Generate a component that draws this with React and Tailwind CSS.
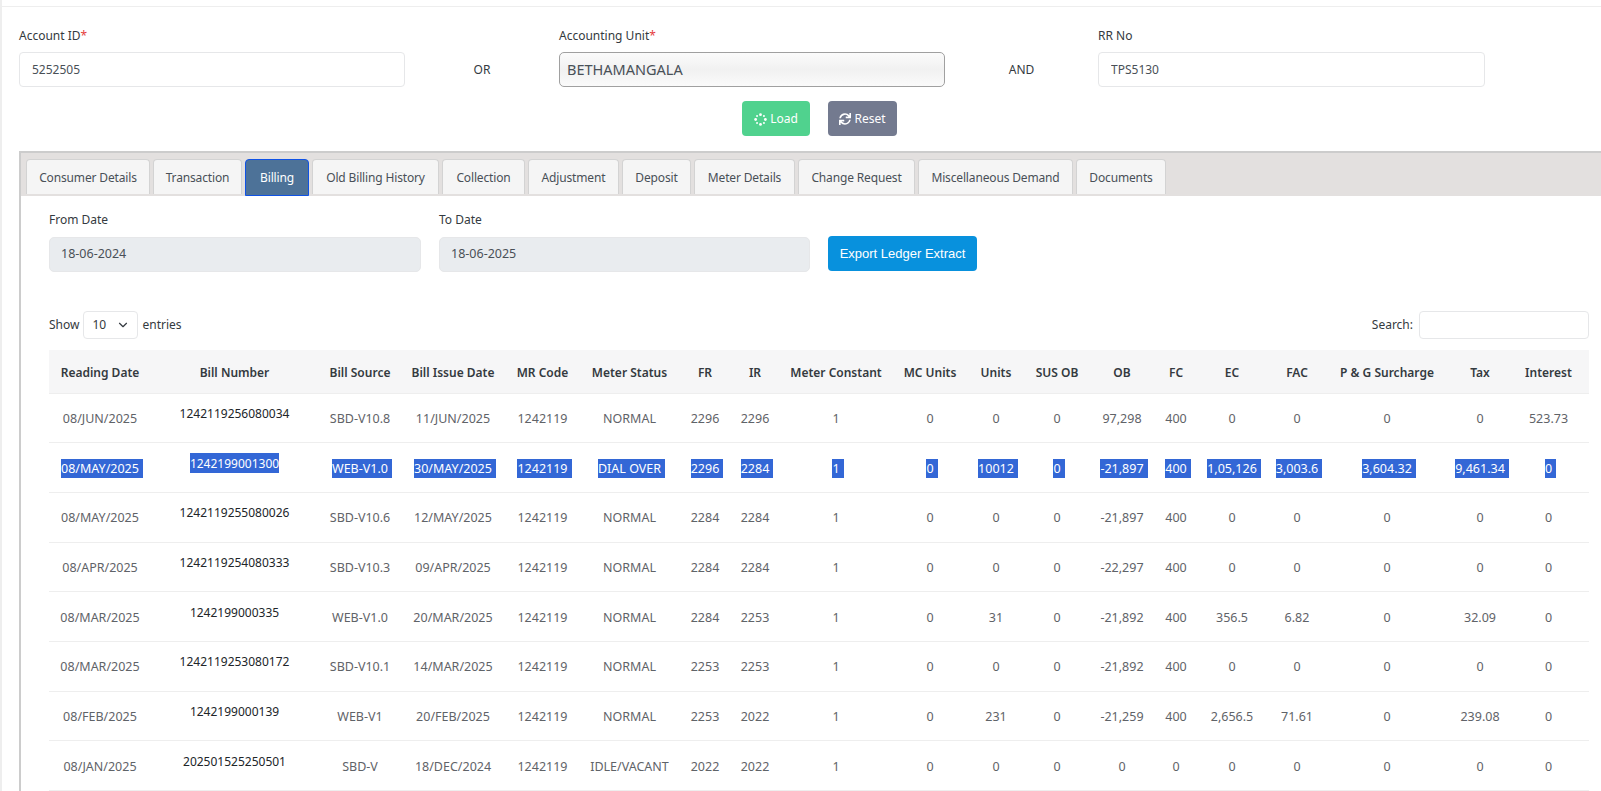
import React from 'react';
import { FaSync } from 'react-icons/fa';
import { ChevronDown } from 'lucide-react';

const tabs = [
  ['Consumer Details', 'w-[124px]'],
  ['Transaction', 'w-[89px]'],
  ['Billing', 'w-[64px]'],
  ['Old Billing History', 'w-[127px]'],
  ['Collection', 'w-[83px]'],
  ['Adjustment', 'w-[91px]'],
  ['Deposit', 'w-[69px]'],
  ['Meter Details', 'w-[101px]'],
  ['Change Request', 'w-[117px]'],
  ['Miscellaneous Demand', 'w-[155px]'],
  ['Documents', 'w-[90px]'],
];

const columns = [
  ['Reading Date', 'w-[102px]'],
  ['Bill Number', 'w-[167px]'],
  ['Bill Source', 'w-[84px]'],
  ['Bill Issue Date', 'w-[102px]'],
  ['MR Code', 'w-[77px]'],
  ['Meter Status', 'w-[97px]'],
  ['FR', 'w-[54px]'],
  ['IR', 'w-[46px]'],
  ['Meter Constant', 'w-[116px]'],
  ['MC Units', 'w-[72px]'],
  ['Units', 'w-[60px]'],
  ['SUS OB', 'w-[62px]'],
  ['OB', 'w-[68px]'],
  ['FC', 'w-[40px]'],
  ['EC', 'w-[72px]'],
  ['FAC', 'w-[58px]'],
  ['P & G Surcharge', 'w-[122px]'],
  ['Tax', 'w-[64px]'],
  ['Interest', 'w-[77px] pr-[4px]'],
];

const rows = [
  ['08/JUN/2025', '1242119256080034', 'SBD-V10.8', '11/JUN/2025', '1242119', 'NORMAL', '2296', '2296', '1', '0', '0', '0', '97,298', '400', '0', '0', '0', '0', '523.73'],
  ['08/MAY/2025', '1242199001300', 'WEB-V1.0', '30/MAY/2025', '1242119', 'DIAL OVER', '2296', '2284', '1', '0', '10012', '0', '-21,897', '400', '1,05,126', '3,003.6', '3,604.32', '9,461.34', '0'],
  ['08/MAY/2025', '1242119255080026', 'SBD-V10.6', '12/MAY/2025', '1242119', 'NORMAL', '2284', '2284', '1', '0', '0', '0', '-21,897', '400', '0', '0', '0', '0', '0'],
  ['08/APR/2025', '1242119254080333', 'SBD-V10.3', '09/APR/2025', '1242119', 'NORMAL', '2284', '2284', '1', '0', '0', '0', '-22,297', '400', '0', '0', '0', '0', '0'],
  ['08/MAR/2025', '1242199000335', 'WEB-V1.0', '20/MAR/2025', '1242119', 'NORMAL', '2284', '2253', '1', '0', '31', '0', '-21,892', '400', '356.5', '6.82', '0', '32.09', '0'],
  ['08/MAR/2025', '1242119253080172', 'SBD-V10.1', '14/MAR/2025', '1242119', 'NORMAL', '2253', '2253', '1', '0', '0', '0', '-21,892', '400', '0', '0', '0', '0', '0'],
  ['08/FEB/2025', '1242199000139', 'WEB-V1', '20/FEB/2025', '1242119', 'NORMAL', '2253', '2022', '1', '0', '231', '0', '-21,259', '400', '2,656.5', '71.61', '0', '239.08', '0'],
  ['08/JAN/2025', '202501525250501', 'SBD-V', '18/DEC/2024', '1242119', 'IDLE/VACANT', '2022', '2022', '1', '0', '0', '0', '0', '0', '0', '0', '0', '0', '0'],
];

function Spinner() {
  const dots = [0, 45, 90, 135, 180, 225, 270, 315];
  return (
    <svg viewBox="0 0 16 16" className="w-[13px] h-[13px]" fill="#fff">
      {dots.map((a, i) => (
        <circle key={a} cx={8 + 6 * Math.cos((a * Math.PI) / 180)} cy={8 + 6 * Math.sin((a * Math.PI) / 180)} r={i % 2 ? 1.2 : 1.7} />
      ))}
    </svg>
  );
}

function Field({ label, required, value, width }) {
  return (
    <div className={width}>
      <div className="h-[27px] text-[12px] leading-[22px] text-[#343a40]">
        {label}
        {required && <span className="text-[#e53e3e]">*</span>}
      </div>
      <input readOnly value={value} className="w-full h-[35px] px-3 text-[12px] text-[#495057] bg-white border border-[#e6e7e9] rounded outline-none" />
    </div>
  );
}

export default function App() {
  return (
    <div className="h-[791px] overflow-hidden bg-white border-l-2 border-[#eeeeee] font-['Noto_Sans',sans-serif]">
      <div className="mt-[6px] border-t border-[#eeeeee] pl-[17px] pt-[18px]">
        <div className="flex items-start">
          <Field label="Account ID" required value="5252505" width="w-[386px]" />
          <div className="w-[154px] pt-[27px] h-[62px] flex items-center justify-center text-[12px] text-[#343a40]">OR</div>
          <div className="w-[386px]">
            <div className="h-[27px] text-[12px] leading-[22px] text-[#343a40]">
              Accounting Unit<span className="text-[#e53e3e]">*</span>
            </div>
            <div className="h-[35px] flex items-center px-[7px] text-[14.5px] text-[#495057] border border-[#a0a0a0] rounded-[5px] bg-gradient-to-b from-[#fbfbfb] via-[#f1f1f1] to-[#fafafa]">BETHAMANGALA</div>
          </div>
          <div className="w-[153px] pt-[27px] h-[62px] flex items-center justify-center text-[12px] text-[#343a40]">AND</div>
          <Field label="RR No" value="TPS5130" width="w-[387px]" />
        </div>
        <div className="flex justify-center gap-[18px] mt-[14px] pl-[19px]">
          <button className="w-[68px] h-[35px] pt-px flex items-center justify-center gap-[3px] rounded bg-[#50d28e] text-white text-[12px]">
            <Spinner />
            Load
          </button>
          <button className="w-[69px] h-[35px] pt-px flex items-center justify-center gap-[3px] rounded bg-[#737a8f] text-white text-[12px]">
            <FaSync className="w-3 h-3" />
            Reset
          </button>
        </div>

        <div className="mt-[15px] border-l-2 border-t-2 border-[#cccccc]">
          <div className="h-[43px] bg-[#e3e0df] pl-[5px] pt-[6px] flex gap-[3px]">
            {tabs.map(([name, w]) => (
              <div
                key={name}
                className={
                  name === 'Billing'
                    ? `${w} h-[37px] pt-px rounded-t flex items-center justify-center text-[12px] tracking-[-0.15px] text-white bg-[#4d7298] border border-[#0f52e6]`
                    : `${w} h-[35px] pt-px rounded-t flex items-center justify-center text-[12px] tracking-[-0.15px] text-[#495057] bg-[#f5f5f5] border border-b-0 border-[#d3d3d3]`
                }
              >
                {name}
              </div>
            ))}
          </div>

          <div className="pl-[28px]">
            <div className="flex items-start mt-[15px]">
              <div className="w-[372px]">
                <div className="h-[26px] text-[12px] leading-[18px] text-[#343a40]">From Date</div>
                <div className="h-[35px] flex items-center px-[11px] text-[12.5px] text-[#495057] bg-[#e9ecef] border border-[#e6e7e9] rounded-[5px]">18-06-2024</div>
              </div>
              <div className="w-[371px] ml-[18px]">
                <div className="h-[26px] text-[12px] leading-[18px] text-[#343a40]">To Date</div>
                <div className="h-[35px] flex items-center px-[11px] text-[12.5px] text-[#495057] bg-[#e9ecef] border border-[#e6e7e9] rounded-[5px]">18-06-2025</div>
              </div>
              <button className="w-[149px] h-[35px] ml-[18px] mt-[25px] rounded bg-[#0891dd] text-white text-[13px] font-['Liberation_Sans',sans-serif]">Export Ledger Extract</button>
            </div>

            <div className="flex items-center justify-between mt-[39px] h-[28px] w-[1540px] text-[12px] text-[#343a40]">
              <div className="flex items-center">
                Show
                <div className="ml-[4px] mr-[4px] w-[55px] h-[28px] pl-[8px] pr-[7px] flex items-center justify-between border border-[#e6e7e9] rounded">
                  10
                  <ChevronDown className="w-[14px] h-[14px] text-[#343a40]" />
                </div>
                entries
              </div>
              <div className="flex items-center gap-[6px]">
                Search:
                <input readOnly className="w-[170px] h-[28px] border border-[#e6e7e9] rounded outline-none" />
              </div>
            </div>

            <table className="mt-[11px] w-[1540px] table-fixed border-collapse text-[12.5px]">
              <thead>
                <tr className="h-[43px] bg-[#f6f6f7] border-b border-[#eeeeee]">
                  {columns.map(([name, w]) => (
                    <th key={name} className={`${w} pt-[3px] text-[12px] font-semibold text-[#343a40] text-center whitespace-nowrap`}>
                      {name}
                    </th>
                  ))}
                </tr>
              </thead>
              <tbody>
                {rows.map((row, r) => (
                  <tr key={r} className="h-[49.7px] border-b border-[#eeeeee]">
                    {row.map((cell, c) => (
                      <td
                        key={c}
                        className={
                          c === 1
                            ? 'pb-2 text-[12px] text-center whitespace-nowrap text-[#212529]'
                            : c === 18
                              ? 'pt-[3px] pr-[4px] text-center whitespace-nowrap text-[#5f6368]'
                              : 'pt-[3px] text-center whitespace-nowrap text-[#5f6368]'
                        }
                      >
                        {r === 1 ? (
                          <span className={c === 1 ? 'bg-[#3367d6] text-white py-[1.5px]' : 'bg-[#3367d6] text-white py-px pr-1 -mr-1'}>{cell}</span>
                        ) : (
                          cell
                        )}
                      </td>
                    ))}
                  </tr>
                ))}
              </tbody>
            </table>
          </div>
        </div>
      </div>
    </div>
  );
}
